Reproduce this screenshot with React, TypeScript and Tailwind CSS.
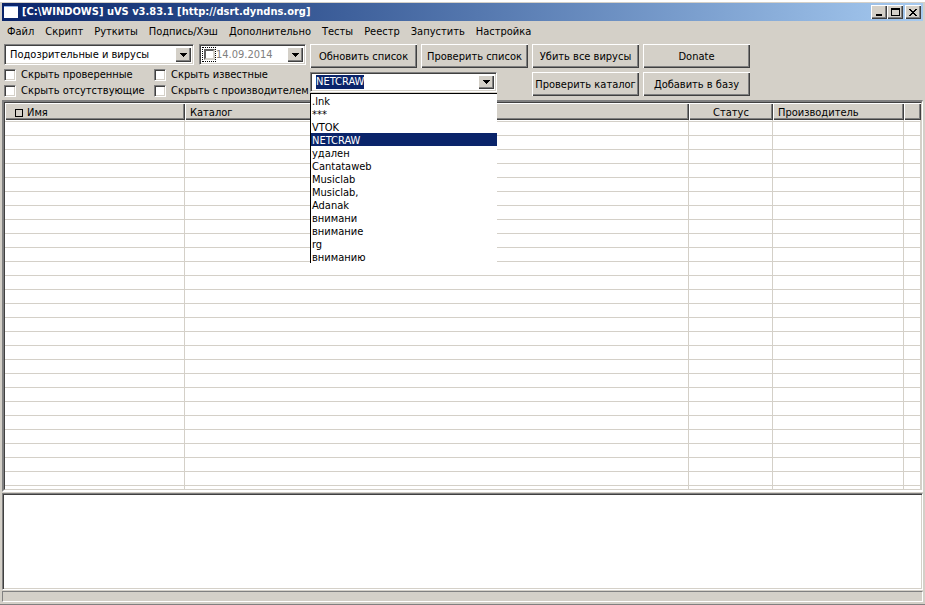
import { useEffect, useRef } from 'react';

const menu = ['Файл', 'Скрипт', 'Руткиты', 'Подпись/Хэш', 'Дополнительно', 'Тесты', 'Реестр', 'Запустить', 'Настройка'];

const filters = ['Скрыть проверенные', 'Скрыть известные', 'Скрыть отсутствующие', 'Скрыть с производителем'];

const signatures = [
  '.lnk',
  '***',
  'VTOK',
  'NETCRAW',
  'удален',
  'Cantataweb',
  'Musiclab',
  'Musiclab,',
  'Adanak',
  'внимани',
  'внимание',
  'rg',
  'вниманию',
];

const rows = Array.from({ length: 28 }, (_, i) => i);

const raised = 'bg-[#d4d0c8] shadow-[inset_1px_1px_#fff,inset_-1px_-1px_#404040,inset_-2px_-2px_#808080]';
const sunken = 'border border-t-[#808080] border-l-[#808080] border-r-white border-b-white';
const inner = 'shadow-[inset_1px_1px_#404040,inset_-1px_-1px_#d4d0c8]';

function Arrow() {
  return (
    <svg width="7" height="4" viewBox="0 0 7 4" shapeRendering="crispEdges" aria-hidden="true">
      <path d="M0 0h7v1H0zM1 1h5v1H1zM2 2h3v1H2zM3 3h1v1H3z" />
    </svg>
  );
}

function DropButton({ label }: { label: string }) {
  return (
    <button aria-label={label} className={`flex w-4 shrink-0 items-center justify-center ${raised}`}>
      <Arrow />
    </button>
  );
}

function PushButton({ children }: { children: string }) {
  return <button className={`h-6 pt-px text-center whitespace-nowrap ${raised}`}>{children}</button>;
}

function SignatureCombo() {
  const input = useRef<HTMLInputElement>(null);

  useEffect(() => {
    input.current?.focus();
    input.current?.select();
  }, []);

  return (
    <div className="relative col-span-2 w-[187px]">
      <div className={`flex h-5 bg-white p-[2px] ${sunken} ${inner}`}>
        <input
          ref={input}
          aria-label="Сигнатура"
          defaultValue="NETCRAW"
          className="w-full min-w-0 pl-[3px] outline-none selection:bg-[#0a246a] selection:text-white"
        />
        <DropButton label="Открыть список" />
      </div>
      <ul role="listbox" className="absolute top-[21px] left-0 z-10 w-full border-t border-l border-black bg-white leading-[15px]">
        {signatures.map((name) => (
          <li
            key={name}
            role="option"
            aria-selected={name === 'NETCRAW'}
            className="h-[13px] pl-px aria-selected:bg-[#0a246a] aria-selected:text-white"
          >
            {name}
          </li>
        ))}
      </ul>
    </div>
  );
}

export default function App() {
  return (
    <div className="flex h-screen flex-col border-b border-[#808080] bg-[#d4d0c8] px-[2px] pt-[3px] pb-[2px] font-['DejaVu_Sans_Condensed','Noto_Sans',sans-serif] text-[11px] leading-[14px] text-black shadow-[inset_0_2px_#fff]">
      <header className="flex h-[18px] shrink-0 items-center bg-linear-to-r from-[#0a246a] to-[#a6caf0] px-[2px]">
        <svg width="14" height="12" viewBox="0 0 14 12" shapeRendering="crispEdges" aria-hidden="true">
          <path d="M0 0h14v12H0z" fill="#fff" />
          <path d="M0 0h14v1H0z" fill="#8fb0e8" />
        </svg>
        <h1 className="flex-1 pl-1 font-bold text-white">[C:\WINDOWS] uVS v3.83.1 [http://dsrt.dyndns.org]</h1>
        <div className="flex h-[14px]">
          <button aria-label="Свернуть" className={`flex w-4 items-center justify-center ${raised}`}>
            <svg width="8" height="8" shapeRendering="crispEdges">
              <path d="M1 6h6v2H1z" />
            </svg>
          </button>
          <button aria-label="Развернуть" className={`flex w-4 items-center justify-center ${raised}`}>
            <svg width="9" height="8" shapeRendering="crispEdges">
              <path d="M0 0h9v8H0zM1 2v5h7V2z" fillRule="evenodd" />
            </svg>
          </button>
          <button aria-label="Закрыть" className={`ml-[2px] flex w-4 items-center justify-center ${raised}`}>
            <svg width="8" height="7" shapeRendering="crispEdges">
              <path d="M0 0h2v1H0zM6 0h2v1H6zM1 1h2v1H1zM5 1h2v1H5zM2 2h4v1H2zM3 3h2v1H3zM2 4h4v1H2zM1 5h2v1H1zM5 5h2v1H5zM0 6h2v1H0zM6 6h2v1H6z" />
            </svg>
          </button>
        </div>
      </header>

      <nav className="flex h-[21px] shrink-0 items-center gap-[11px] px-[5px]">
        {menu.map((item) => (
          <button key={item}>{item}</button>
        ))}
      </nav>

      <div className="flex shrink-0 gap-1 px-[2px] pt-[2px] pb-px">
        <div className="w-[302px]">
          <div className="flex justify-between">
            <div className={`flex h-[21px] w-[190px] bg-white p-[2px] ${sunken} ${inner}`}>
              <select aria-label="Категория" className="w-full min-w-0 appearance-none pl-[3px]">
                <option>Подозрительные и вирусы</option>
              </select>
              <DropButton label="Категории" />
            </div>
            <div className={`flex h-[21px] w-[107px] bg-white p-[2px] ${sunken} ${inner}`}>
              <span className="flex w-[14px] shrink-0 items-center justify-center border border-dotted border-black">
                <input
                  type="checkbox"
                  aria-label="Фильтр по дате"
                  className="size-[11px] shrink-0 appearance-none border-2 border-t-[#606060] border-r-[#d4d0c8] border-b-[#d4d0c8] border-l-[#606060]"
                />
              </span>
              <input aria-label="Дата" defaultValue="14.09.2014" className="w-full min-w-0 text-[#808080]" />
              <DropButton label="Календарь" />
            </div>
          </div>
          <div className="mt-[2px] grid grid-cols-[150px_auto] leading-4">
            {filters.map((name) => (
              <label key={name} className="flex h-4 items-center gap-[5px] whitespace-nowrap">
                <input type="checkbox" className={`size-3 shrink-0 appearance-none bg-white ${sunken} ${inner}`} />
                {name}
              </label>
            ))}
          </div>
        </div>

        <div className="grid grid-cols-[107px_107px_107px_107px] content-start gap-1">
          <PushButton>Обновить список</PushButton>
          <PushButton>Проверить список</PushButton>
          <PushButton>Убить все вирусы</PushButton>
          <PushButton>Donate</PushButton>
          <SignatureCombo />
          <PushButton>Проверить каталог</PushButton>
          <PushButton>Добавить в базу</PushButton>
        </div>
      </div>

      <main className="flex min-h-0 flex-1 flex-col gap-px">
        <div className="min-h-0 flex-1 border-t-2 border-r border-b-2 border-l-2 border-t-[#808080] border-r-white border-b-white border-l-[#808080]">
          <div className="h-full overflow-hidden border border-t-[#404040] border-r-[#d4d0c8] border-b-[#d4d0c8] border-l-[#404040] bg-white">
            <table className="w-full table-fixed border-separate border-spacing-0">
              <colgroup>
                <col className="w-[180px]" />
                <col />
                <col className="w-[84px]" />
                <col className="w-[131px]" />
                <col className="w-[17px]" />
              </colgroup>
              <thead>
                <tr className="h-[17px] text-left *:p-0 *:pt-[2px] *:font-normal">
                  <th className={raised}>
                    <span className="flex items-center gap-1 pl-[10px]">
                      <span className="size-2 border border-black" />
                      Имя
                    </span>
                  </th>
                  <th className={raised}>
                    <span className="pl-[5px]">Каталог</span>
                  </th>
                  <th className={`text-center ${raised}`}>Статус</th>
                  <th className={raised}>
                    <span className="pl-[5px]">Производитель</span>
                  </th>
                  <th className={raised} />
                </tr>
              </thead>
              <tbody>
                {rows.map((row) => (
                  <tr key={row} className="h-[14px] *:border-r *:border-b *:border-[#d4d0c8] *:p-0 first:h-[2px]">
                    <td />
                    <td />
                    <td />
                    <td />
                    <td />
                  </tr>
                ))}
              </tbody>
            </table>
          </div>
        </div>
        <textarea
          aria-label="Журнал"
          className={`block h-[97px] w-full shrink-0 resize-none bg-white ${sunken} ${inner}`}
        />
      </main>

      <footer className={`mt-px h-[11px] shrink-0 ${sunken}`} />
    </div>
  );
}
